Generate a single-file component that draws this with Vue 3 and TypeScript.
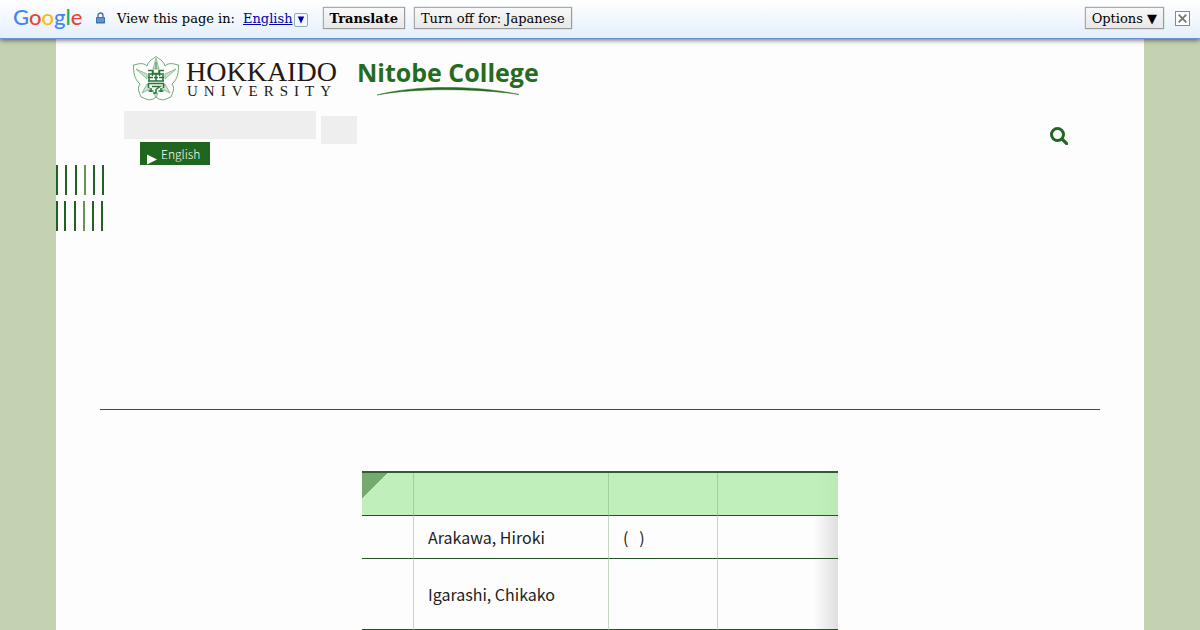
<script setup lang="ts">
interface Member {
  name: string
  note: string
  tall: boolean
}

const brand = [
  { letter: 'G', tone: 'blue' },
  { letter: 'o', tone: 'red' },
  { letter: 'o', tone: 'yellow' },
  { letter: 'g', tone: 'blue' },
  { letter: 'l', tone: 'green' },
  { letter: 'e', tone: 'red' },
]

const members: Member[] = [
  { name: 'Arakawa, Hiroki', note: '(\u00a0\u00a0\u00a0)', tall: false },
  { name: 'Igarashi, Chikako', note: '', tall: true },
]

const stripeRows = [
  [0, 9, 19, 28, 37, 46],
  [0, 8, 18, 27, 36, 45],
]
</script>

<template>
  <div class="site">
    <div class="toolbar">
      <span class="google"><span v-for="(b, i) in brand" :key="i" :class="b.tone">{{ b.letter }}</span></span>
      <svg class="lock" width="11" height="12" viewBox="0 0 10 12" aria-hidden="true">
        <path d="M2.5 6V3.5a2.5 2.5 0 0 1 5 0V6" fill="none" stroke="#4473ae" stroke-width="1.4" />
        <rect x="0.5" y="5" width="9" height="6.5" rx="0.6" fill="#3b71b5" />
        <path d="M1.5 7h7M1.5 9h7" stroke="#a9cdf0" stroke-width="0.8" />
      </svg>
      <span class="prompt">View this page in:</span>
      <a class="language" href="#">English</a>
      <button class="pick" type="button" aria-label="Choose language">
        <svg width="8" height="8" viewBox="0 0 8 8"><path d="M0.8 0.5h6.4L4 7.5z" fill="#0000a8" /></svg>
      </button>
      <button class="tool translate" type="button">Translate</button>
      <button class="tool" type="button">Turn off for: Japanese</button>
      <button class="tool options" type="button">Options ▼</button>
      <button class="close" type="button" aria-label="Close">
        <svg width="9" height="9" viewBox="0 0 9 9"><path d="M0.7 0.7l7.6 7.6M8.3 0.7L0.7 8.3" stroke="#777" stroke-width="1.9" /></svg>
      </button>
    </div>

    <div class="page">
      <header class="header">
        <div class="logos">
          <svg class="crest" width="48" height="48" viewBox="0 0 48 48" fill="none" stroke="#5d9d63" aria-hidden="true">
            <path d="M15 11C17 5 21 4 24 1.500C27 4 31 5 33 11C37 7 42 9 46.500 10C46.500 17 46 24 40 29C43 33 41 37 39 42C34 44 29 47 24 42C19 47 14 44 9 42C7 37 5 33 8 29C2 24 1.500 17 1.500 10C6 9 11 7 15 11z" stroke-width="0.9" />
            <path d="M24 3l-3 11h6zM4 14l11 5v5zM44 14l-11 5v5zM10 38l5-9 3 5zM38 38l-5-9-3 5zM24 43l-2-5h4z" stroke-width="0.6" fill="#cfe4d1" />
            <path d="M24 7v7" stroke="#398144" stroke-width="1" />
            <path d="M16 15.500h5v3h6v-3h5M16 19h16M20.500 15v6M27.500 15v6M16 22.500h5M27 22.500h5M16 26h16M17 20v6M31 20v6M22 22.500h4M24 19v7" stroke="#257536" stroke-width="1.5" />
            <path d="M16.500 33v-4.500h15v4.500M20 31.500h8l-4 3v3.500h-3M16.500 36h5M26.500 36h5M19 33v4M29 33v4" stroke="#257536" stroke-width="1.5" />
          </svg>
          <div class="university">
            <span class="name">HOKKAIDO</span>
            <span class="kind">UNIVERSITY</span>
          </div>
          <div class="college">
            <span>Nitobe College</span>
            <svg class="swoosh" width="142" height="9" viewBox="0 0 142 9" aria-hidden="true">
              <path d="M0 8C38-2 98-2 142 7.500C98 1 38 1 0 8z" fill="#256b20" stroke="#256b20" stroke-width="0.5" />
            </svg>
          </div>
        </div>
        <div class="tools">
          <div class="menu">
            <div class="bar"></div>
            <a class="english" href="#">
              <svg width="10" height="11" viewBox="0 0 10 11" aria-hidden="true"><path d="M0 0.500L10 5.500L0 10.500z" fill="#fff" /></svg>
              <span>English</span>
            </a>
          </div>
          <div class="bar small"></div>
          <button class="search" type="button" aria-label="Search">
            <svg width="18" height="18" viewBox="0 0 18 18" fill="none" stroke="#226822">
              <circle cx="7.500" cy="7.500" r="6" stroke-width="3" />
              <path d="M12 12l4.700 4.700" stroke-width="3.200" stroke-linecap="round" />
            </svg>
          </button>
        </div>
      </header>

      <svg v-for="(row, i) in stripeRows" :key="i" class="stripes" width="48" height="30" viewBox="0 0 48 30" aria-hidden="true">
        <rect v-for="(x, n) in row" :key="n" :x="x" y="0" width="2" height="30" :fill="n === 3 ? '#66954e' : '#245f25'" />
      </svg>

      <main class="content">
        <div class="listing">
          <table>
            <colgroup>
              <col class="c1" /><col class="c2" /><col class="c3" /><col class="c4" />
            </colgroup>
            <thead>
              <tr><th></th><th></th><th></th><th></th></tr>
            </thead>
            <tbody>
              <tr v-for="m in members" :key="m.name" :class="{ tall: m.tall }">
                <td></td>
                <td>{{ m.name }}</td>
                <td>{{ m.note }}</td>
                <td></td>
              </tr>
            </tbody>
          </table>
        </div>
      </main>
    </div>
  </div>
</template>

<style>
body {
  margin: 0;
  background: #c4d2b2;
}
</style>

<style scoped>
.site {
  height: 100vh;
  overflow: hidden;
  display: flex;
  flex-direction: column;
}
.toolbar {
  flex: none;
  position: relative;
  display: flex;
  align-items: center;
  box-sizing: border-box;
  height: 39px;
  padding: 0 10px 2px 13px;
  border-bottom: 1px solid #6b90d0;
  background: linear-gradient(#fff, #e4effb);
  box-shadow: 0 1px 5px rgba(0, 0, 0, 0.6);
  font: 13px/16px "DejaVu Serif", serif;
  color: #000;
}
.google {
  width: 82px;
  font: 500 22px/26px "Lato", sans-serif;
  padding-bottom: 2px;
}
.blue { color: #4285f4; }
.red { color: #ea4335; }
.yellow { color: #fbbc05; }
.green { color: #34a853; }
.lock {
  margin-right: 11px;
}
.prompt {
  padding-top: 2px;
  margin-right: 8px;
}
.language {
  padding-top: 2px;
  color: #0000a8;
}
.pick {
  display: flex;
  align-items: center;
  justify-content: center;
  width: 14px;
  height: 14px;
  margin: 4px 15px 0 1px;
  padding: 0;
  border: 1px solid #8cacbb;
  border-radius: 2px;
  background: #f2f7fd;
}
.tool {
  height: 22px;
  margin: 0 9px 0 0;
  padding: 2px 6px 0;
  border: 1px solid #aaa;
  border-right-color: #999;
  border-bottom-color: #999;
  background: linear-gradient(#f8f8f8, #e8e8e8);
  box-shadow: 0 0 1px #999;
  font: inherit;
  color: #000;
}
.translate {
  font-weight: bold;
}
.options {
  margin: 0 11px 0 auto;
}
.close {
  display: flex;
  align-items: center;
  justify-content: center;
  width: 15px;
  height: 15px;
  padding: 0;
  border: 1px solid #888;
  background: #fff;
}
.page {
  flex: 1;
  margin: 0 56px;
  background: #fdfdfd;
}
.header {
  padding: 16px 76px 0 68px;
}
.logos {
  display: flex;
  align-items: flex-start;
  height: 56px;
  padding-left: 8px;
}
.crest {
  flex: none;
}
.university {
  display: flex;
  flex-direction: column;
  margin: 5px 0 0 6px;
  font-family: "Liberation Serif", serif;
  color: #231815;
}
.name {
  font-size: 28px;
  line-height: 24px;
}
.kind {
  padding-left: 1px;
  font-size: 15px;
  line-height: 14px;
  letter-spacing: 6px;
}
.college {
  display: flex;
  flex-direction: column;
  margin-left: 20px;
  font: bold 25px/34px "Open Sans", sans-serif;
  color: #256b20;
}
.swoosh {
  margin: -2px 0 0 20px;
}
.tools {
  display: flex;
  align-items: flex-start;
}
.menu {
  display: flex;
  flex-direction: column;
  align-items: flex-start;
  gap: 3px;
  margin-right: 5px;
}
.bar {
  width: 192px;
  height: 28px;
  background: #eee;
}
.small {
  width: 36px;
  margin-top: 5px;
}
.english {
  display: flex;
  align-items: flex-end;
  gap: 4px;
  box-sizing: border-box;
  height: 23px;
  margin-left: 16px;
  padding: 0 10px 0 7px;
  background: #20661e;
  color: #fff;
  font: 300 12px/23px "Noto Sans CJK JP", sans-serif;
  text-decoration: none;
}
.search {
  display: flex;
  margin: 16px 0 0 auto;
  padding: 0;
  border: 0;
  background: none;
}
.stripes {
  display: block;
  margin-bottom: 6px;
}
.content {
  margin: 178px 44px 0;
  padding-top: 61px;
  border-top: 1px solid #206020;
}
.listing {
  width: 476px;
  margin: 0 auto;
}
table {
  width: 100%;
  table-layout: fixed;
  border-collapse: separate;
  border-spacing: 0;
  border-top: 2px solid #26622b;
  font: 16px/22px "Noto Sans CJK JP", sans-serif;
  color: #222;
}
.c1 { width: 52px; }
.c2 { width: 195px; }
.c3 { width: 109px; }
th,
td {
  box-sizing: border-box;
  height: 43px;
  padding: 0 14px;
  border-right: 1px solid #c3d8c5;
  border-bottom: 1px solid #245426;
  text-align: left;
}
th {
  background: #c1efbc;
  border-right-color: #a3cea1;
}
th:first-child {
  background: linear-gradient(135deg, #74aa6e 18px, transparent 18px) #c1efbc;
}
th:last-child,
td:last-child {
  border-right: 0;
}
th:last-child {
  background: linear-gradient(to left, #bce9b6, #c1efbc 24px);
}
td:last-child {
  background: linear-gradient(to left, #dedede, #fdfdfd 24px);
}
.tall td {
  height: 71px;
}
</style>
